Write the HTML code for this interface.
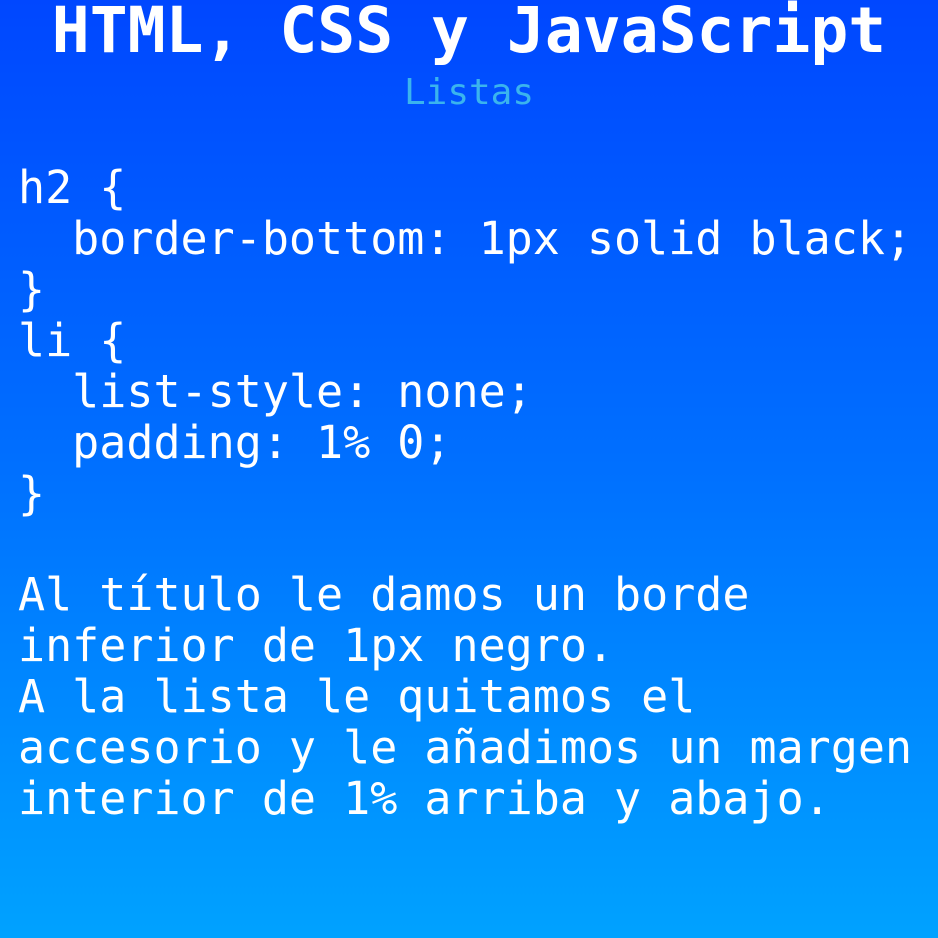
<!DOCTYPE html>
<html><head><meta charset="utf-8"><style>
html,body{margin:0;padding:0}
body{width:938px;height:938px;overflow:hidden;position:relative;background:linear-gradient(180deg,#0047ff 0%,#0070ff 50%,#00a2ff 100%);font-family:"DejaVu Sans Mono","Liberation Mono",monospace;color:#fff}
.t{position:absolute;left:0;width:938px;text-align:center;white-space:pre}
.c{position:absolute;left:18px;top:162px;font-size:45px;line-height:51px;white-space:pre}
</style></head><body>
<div class="t" style="top:-1px;font-size:63px;line-height:63px;font-weight:bold">HTML, CSS y JavaScript</div>
<div class="t" style="top:75px;font-size:36px;line-height:36px;color:#3ab4ee">Listas</div>
<div class="c">h2 {
  border-bottom: 1px solid black;
}
li {
  list-style: none;
  padding: 1% 0;
}</div>
<div class="c" style="top:569px">Al título le damos un borde
inferior de 1px negro.
A la lista le quitamos el
accesorio y le añadimos un margen
interior de 1% arriba y abajo.</div>
</body></html>
